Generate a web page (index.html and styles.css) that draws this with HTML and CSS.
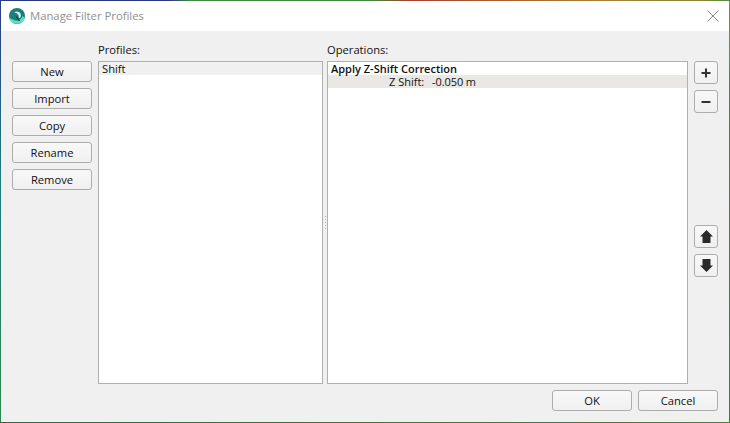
FILE: index.html
```html
<!DOCTYPE html>
<html lang="en">
<head>
<meta charset="utf-8">
<title>Manage Filter Profiles</title>
<link rel="stylesheet" href="styles.css">
</head>
<body>
<div class="window">
  <header class="titlebar">
    <svg class="app-icon" width="16" height="16" viewBox="0 0 16 16">
      <circle cx="8" cy="8" r="8" fill="#1a7f78"/>
      <path d="M0.3 10 A8 8 0 0 0 15.7 10 L13.5 8 A6 6 0 0 1 5 12 Z" fill="#62dcc0"/>
      <path d="M5 4.5 A5 5 0 0 1 10 4 A4.5 4.5 0 0 1 11 10 L9.5 9.5 A3 3 0 0 0 8.5 6 A3.5 3.5 0 0 0 5 4.5Z" fill="#d5f1ec"/>
      <path d="M7.5 8.5 L10.5 13" stroke="#0c3f46" stroke-width="1.3" fill="none"/>
    </svg>
    <span class="title">Manage Filter Profiles</span>
    <svg class="close" width="12" height="12" viewBox="0 0 12 12">
      <path d="M0.5 0.5 L11.5 11.5 M11.5 0.5 L0.5 11.5" stroke="#8a8a8a" stroke-width="1" fill="none"/>
    </svg>
  </header>
  <main class="content">
    <div class="columns">
      <nav class="actions">
        <button class="btn">New</button>
        <button class="btn">Import</button>
        <button class="btn">Copy</button>
        <button class="btn">Rename</button>
        <button class="btn">Remove</button>
      </nav>
      <section class="pane pane-profiles">
        <div class="label">Profiles:</div>
        <div class="list">
          <div class="row row-selected">Shift</div>
        </div>
      </section>
      <div class="splitter"><span class="grip"></span></div>
      <section class="pane pane-ops">
        <div class="label">Operations:</div>
        <div class="list">
          <div class="row op-title">Apply Z-Shift Correction</div>
          <div class="row op-detail">Z Shift: <span class="op-value">-0.050 m</span></div>
        </div>
      </section>
      <div class="tools">
        <div class="tool-group">
          <button class="btn tool">
            <svg width="12" height="12" viewBox="0 0 12 12"><path d="M6 1.5 V10.5 M1.5 6 H10.5" stroke="#333" stroke-width="2" fill="none"/></svg>
          </button>
          <button class="btn tool">
            <svg width="12" height="12" viewBox="0 0 12 12"><path d="M1.5 6 H10.5" stroke="#333" stroke-width="2" fill="none"/></svg>
          </button>
        </div>
        <div class="tool-group">
          <button class="btn tool">
            <svg width="15" height="15" viewBox="0 0 15 15"><path d="M7.5 1 L14 7.5 H11.5 V14 H3.5 V7.5 H1 Z" fill="#2b2b2b"/></svg>
          </button>
          <button class="btn tool">
            <svg width="15" height="15" viewBox="0 0 15 15"><path d="M3.5 1 H11.5 V7.5 H14 L7.5 14 L1 7.5 H3.5 Z" fill="#2b2b2b"/></svg>
          </button>
        </div>
      </div>
    </div>
    <footer class="footer">
      <button class="btn">OK</button>
      <button class="btn">Cancel</button>
    </footer>
  </main>
</div>
</body>
</html>
```
FILE: styles.css
```css
* { box-sizing: border-box; }
html, body { margin: 0; padding: 0; }
body {
  width: 730px;
  height: 423px;
  overflow: hidden;
  font-family: "Open Sans", "Noto Sans", "Liberation Sans", sans-serif;
  font-size: 11.2px;
  color: #111;
}
.window {
  width: 730px;
  height: 423px;
  padding: 1px;
  display: flex;
  flex-direction: column;
  background:
    linear-gradient(90deg, #2b3a80 0, #2b3a80 170px, #3d8a3d 190px, #3d8a3d 370px, #a8402e 410px, #a8802e 600px, #8a8a30 700px, #4f8a3d 730px) top / 100% 1px no-repeat,
    linear-gradient(90deg, #2d6a4a, #4f7f3d) bottom / 100% 1px no-repeat,
    linear-gradient(180deg, #2b3a80 0, #1f7a80 40%, #2f8a50 100%) left / 1px 100% no-repeat,
    linear-gradient(180deg, #8a8a30 0, #3d8a3d 30%, #3d7a3d 100%) right / 1px 100% no-repeat;
}
.titlebar {
  height: 30px;
  flex: none;
  background: #fff;
  display: flex;
  align-items: center;
  padding: 0 10px 0 8px;
  gap: 5px;
}
.app-icon { flex: none; }
.title {
  font-size: 11.3px;
  color: #8f8f8f;
  flex: 1;
  margin-top: -1px;
}
.close { flex: none; margin-top: -1px; }
.content {
  flex: 1;
  background: #f0f0f0;
  display: flex;
  flex-direction: column;
  padding: 0 11px 11px 11px;
  min-height: 0;
}
.columns {
  flex: none;
  height: 353px;
  display: flex;
}
.actions {
  width: 80px;
  flex: none;
  margin-top: 30px;
  display: flex;
  flex-direction: column;
  gap: 6px;
}
.btn {
  font: inherit;
  color: #111;
  width: 80px;
  height: 21px;
  padding: 0;
  border: 1px solid #adadad;
  border-radius: 3px;
  background: linear-gradient(#f8f8f8, #f0f0f0);
  display: flex;
  align-items: center;
  justify-content: center;
}
.pane {
  display: flex;
  flex-direction: column;
}
.pane-profiles { width: 225px; margin-left: 6px; flex: none; }
.pane-ops { width: 361px; flex: none; }
.label {
  height: 30px;
  padding-top: 11px;
  line-height: 15px;
}
.list {
  flex: 1;
  background: #fff;
  border: 1px solid #b0b0b0;
  min-height: 0;
}
.row {
  height: 13px;
  line-height: 13px;
  padding-left: 3px;
}
.row-selected { background: #f0f0f0; }
.op-title { font-weight: 600; font-size: 11px; }
.op-detail { background: #e9e8e4; padding-left: 61px; font-size: 11px; }
.op-value { margin-left: 5px; letter-spacing: -0.1px; }
.splitter {
  width: 4px;
  flex: none;
  display: flex;
  align-items: center;
  justify-content: center;
  padding-top: 30px;
}
.grip {
  width: 1px;
  height: 13px;
  background: repeating-linear-gradient(#b4b4b4 0, #b4b4b4 1px, transparent 1px, transparent 3px);
}
.tools {
  width: 24px;
  margin-left: 6px;
  flex: none;
  padding-top: 30px;
  display: flex;
  flex-direction: column;
  gap: 112px;
}
.tool-group {
  display: flex;
  flex-direction: column;
  gap: 6px;
}
.tool { width: 24px; height: 23px; }
.footer {
  flex: none;
  margin-top: 6px;
  display: flex;
  justify-content: flex-end;
  gap: 6px;
}
```
